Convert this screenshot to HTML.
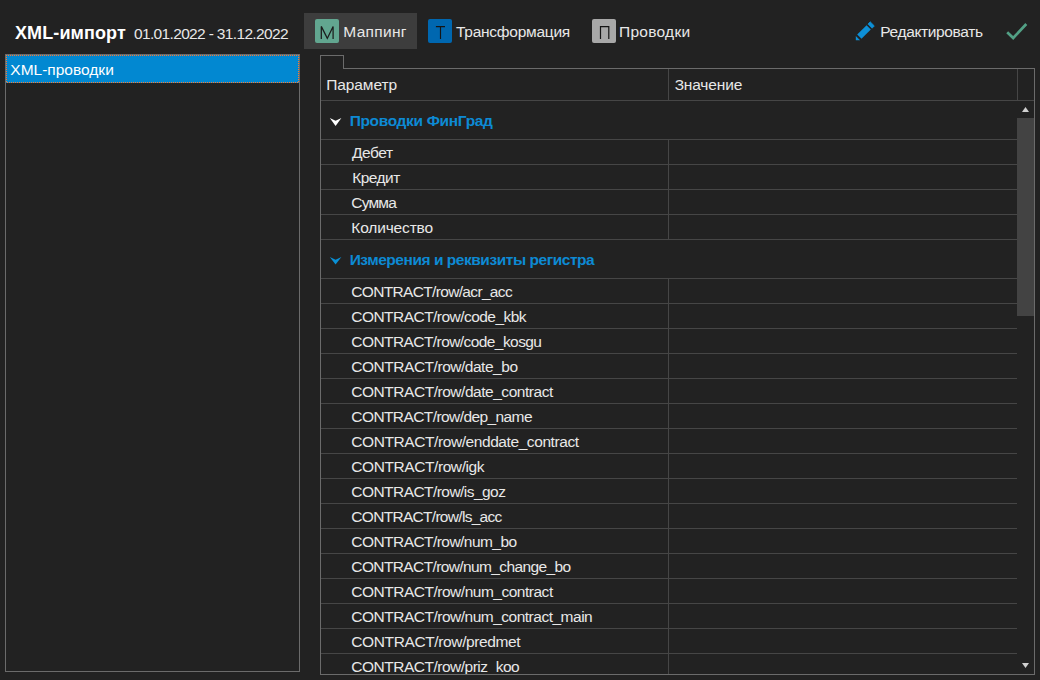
<!DOCTYPE html>
<html><head><meta charset="utf-8"><style>
html,body{margin:0;padding:0;}
body{width:1040px;height:680px;overflow:hidden;background:#222222;position:relative;font-family:"Liberation Sans",sans-serif;}
.t{position:absolute;white-space:nowrap;}
.r{position:absolute;box-sizing:content-box;}
#clip{position:absolute;left:0;top:0;width:1040px;height:674px;overflow:hidden;}
</style></head><body>
<svg class="r" style="left:0;top:0" width="1040" height="680" viewBox="0 0 1040 680" shape-rendering="crispEdges"><polyline points="320.5,674 320.5,55.5 343.5,55.5 343.5,68.5 1034.5,68.5 1034.5,674.5 320,674.5" fill="none" stroke="#6b6b6b" stroke-width="1"/><line x1="321" y1="100.5" x2="1034" y2="100.5" stroke="#464646" stroke-width="1"/><line x1="668.5" y1="69" x2="668.5" y2="100" stroke="#464646" stroke-width="1"/><line x1="1017.5" y1="69" x2="1017.5" y2="100" stroke="#464646" stroke-width="1"/><line x1="321" y1="139.5" x2="1017" y2="139.5" stroke="#464646" stroke-width="1"/><line x1="321" y1="164.5" x2="1017" y2="164.5" stroke="#464646" stroke-width="1"/><line x1="668.5" y1="140" x2="668.5" y2="164" stroke="#464646" stroke-width="1"/><line x1="321" y1="189.5" x2="1017" y2="189.5" stroke="#464646" stroke-width="1"/><line x1="668.5" y1="165" x2="668.5" y2="189" stroke="#464646" stroke-width="1"/><line x1="321" y1="214.5" x2="1017" y2="214.5" stroke="#464646" stroke-width="1"/><line x1="668.5" y1="190" x2="668.5" y2="214" stroke="#464646" stroke-width="1"/><line x1="321" y1="239.5" x2="1017" y2="239.5" stroke="#464646" stroke-width="1"/><line x1="668.5" y1="215" x2="668.5" y2="239" stroke="#464646" stroke-width="1"/><line x1="321" y1="278.5" x2="1017" y2="278.5" stroke="#464646" stroke-width="1"/><line x1="321" y1="303.5" x2="1017" y2="303.5" stroke="#464646" stroke-width="1"/><line x1="668.5" y1="279" x2="668.5" y2="303" stroke="#464646" stroke-width="1"/><line x1="321" y1="328.5" x2="1017" y2="328.5" stroke="#464646" stroke-width="1"/><line x1="668.5" y1="304" x2="668.5" y2="328" stroke="#464646" stroke-width="1"/><line x1="321" y1="353.5" x2="1017" y2="353.5" stroke="#464646" stroke-width="1"/><line x1="668.5" y1="329" x2="668.5" y2="353" stroke="#464646" stroke-width="1"/><line x1="321" y1="378.5" x2="1017" y2="378.5" stroke="#464646" stroke-width="1"/><line x1="668.5" y1="354" x2="668.5" y2="378" stroke="#464646" stroke-width="1"/><line x1="321" y1="403.5" x2="1017" y2="403.5" stroke="#464646" stroke-width="1"/><line x1="668.5" y1="379" x2="668.5" y2="403" stroke="#464646" stroke-width="1"/><line x1="321" y1="428.5" x2="1017" y2="428.5" stroke="#464646" stroke-width="1"/><line x1="668.5" y1="404" x2="668.5" y2="428" stroke="#464646" stroke-width="1"/><line x1="321" y1="453.5" x2="1017" y2="453.5" stroke="#464646" stroke-width="1"/><line x1="668.5" y1="429" x2="668.5" y2="453" stroke="#464646" stroke-width="1"/><line x1="321" y1="478.5" x2="1017" y2="478.5" stroke="#464646" stroke-width="1"/><line x1="668.5" y1="454" x2="668.5" y2="478" stroke="#464646" stroke-width="1"/><line x1="321" y1="503.5" x2="1017" y2="503.5" stroke="#464646" stroke-width="1"/><line x1="668.5" y1="479" x2="668.5" y2="503" stroke="#464646" stroke-width="1"/><line x1="321" y1="528.5" x2="1017" y2="528.5" stroke="#464646" stroke-width="1"/><line x1="668.5" y1="504" x2="668.5" y2="528" stroke="#464646" stroke-width="1"/><line x1="321" y1="553.5" x2="1017" y2="553.5" stroke="#464646" stroke-width="1"/><line x1="668.5" y1="529" x2="668.5" y2="553" stroke="#464646" stroke-width="1"/><line x1="321" y1="578.5" x2="1017" y2="578.5" stroke="#464646" stroke-width="1"/><line x1="668.5" y1="554" x2="668.5" y2="578" stroke="#464646" stroke-width="1"/><line x1="321" y1="603.5" x2="1017" y2="603.5" stroke="#464646" stroke-width="1"/><line x1="668.5" y1="579" x2="668.5" y2="603" stroke="#464646" stroke-width="1"/><line x1="321" y1="628.5" x2="1017" y2="628.5" stroke="#464646" stroke-width="1"/><line x1="668.5" y1="604" x2="668.5" y2="628" stroke="#464646" stroke-width="1"/><line x1="321" y1="653.5" x2="1017" y2="653.5" stroke="#464646" stroke-width="1"/><line x1="668.5" y1="629" x2="668.5" y2="653" stroke="#464646" stroke-width="1"/><line x1="668.5" y1="654" x2="668.5" y2="674" stroke="#464646" stroke-width="1"/><rect x="1017" y="118" width="17" height="198" fill="#434343"/></svg>
<div class="t" style="left:15.00px;top:22.51px;font-size:18px;line-height:20.682px;color:#ffffff;font-weight:700;letter-spacing:0.100px">XML-импорт</div><div class="t" style="left:134.00px;top:24.77px;font-size:15.5px;line-height:17.809px;color:#e8e8e8;font-weight:400;letter-spacing:-0.655px">01.01.2022 - 31.12.2022</div><div class="r" style="left:304px;top:13px;width:113px;height:36px;background:#3d3d3d;"></div><div class="r" style="left:315px;top:19px;width:24px;height:24px;background:#62a690;border-radius:2px"></div><div class="t" style="left:343.30px;top:23.07px;font-size:15.5px;line-height:17.809px;color:#e8e8e8;font-weight:400;letter-spacing:0.300px">Маппинг</div><div class="r" style="left:428px;top:19px;width:24px;height:24px;background:#0067b0;border-radius:2px"></div><div class="t" style="left:455.98px;top:23.07px;font-size:15.5px;line-height:17.809px;color:#e8e8e8;font-weight:400;letter-spacing:-0.255px">Трансформация</div><div class="r" style="left:592px;top:19px;width:24px;height:24px;background:#a8a8a8;border-radius:2px"></div><div class="t" style="left:619.10px;top:23.07px;font-size:15.5px;line-height:17.809px;color:#e8e8e8;font-weight:400;letter-spacing:0.257px">Проводки</div><svg class="r" style="left:0;top:0" width="1040" height="60" viewBox="0 0 1040 60">
<polygon points="870.2,21.8 874.3,25.9 872.1,28.2 868,24.1" fill="#0d8fd6" stroke="#0d8fd6" stroke-width="0.8" stroke-linejoin="round"/>
<polygon points="866.6,25.2 870.8,29.4 861.5,38.8 857.2,34.5" fill="#0d8fd6"/>
<polygon points="855.8,36 855.8,40.2 860.1,40.2" fill="#0d8fd6"/>
<polyline points="1007.2,32.2 1013.2,38 1026.3,24" fill="none" stroke="#52a085" stroke-width="2.7"/>
<path d="M321.3,39 V26.4 L327.3,38.4 L333.1,26.4 V39" fill="none" stroke="#1c1c1c" stroke-width="1.25" stroke-linejoin="miter"/>
<path d="M435.9,26.6 H445 M440.5,26.6 V39" fill="none" stroke="#151515" stroke-width="1.15"/>
<path d="M600.5,39 V26.6 H608.8 V39" fill="none" stroke="#151515" stroke-width="1.2"/>
</svg><div class="t" style="left:880.28px;top:23.07px;font-size:15.5px;line-height:17.809px;color:#e8e8e8;font-weight:400;letter-spacing:-0.360px">Редактировать</div><div class="r" style="left:5px;top:54px;width:293px;height:616px;border:1px solid #6b6b6b"></div><div class="r" style="left:6px;top:55px;width:293px;height:28px;background:#0288d1;"></div><svg class="r" style="left:0;top:0" width="300" height="90" shape-rendering="crispEdges"><line x1="6" y1="55.5" x2="299" y2="55.5" stroke="#ff7a30" stroke-dasharray="1 1"/><line x1="7" y1="82.5" x2="299" y2="82.5" stroke="#ff7a30" stroke-dasharray="1 1"/><line x1="6.5" y1="55" x2="6.5" y2="83" stroke="#ff7a30" stroke-dasharray="1 1"/><line x1="298.5" y1="55" x2="298.5" y2="83" stroke="#ff7a30" stroke-dasharray="1 1"/></svg><div class="t" style="left:10.30px;top:61.17px;font-size:15.5px;line-height:17.809px;color:#ffffff;font-weight:400;letter-spacing:0.000px">XML-проводки</div><div class="t" style="left:326.26px;top:75.97px;font-size:15.5px;line-height:17.809px;color:#e8e8e8;font-weight:400;letter-spacing:-0.103px">Параметр</div><div class="t" style="left:674.64px;top:75.97px;font-size:15.5px;line-height:17.809px;color:#e8e8e8;font-weight:400;letter-spacing:-0.154px">Значение</div>
<div id="clip"><div class="t" style="left:349.64px;top:111.97px;font-size:15.5px;line-height:17.809px;color:#0d8ad4;font-weight:700;letter-spacing:-0.336px">Проводки ФинГрад</div><div class="t" style="left:352.00px;top:143.97px;font-size:15.5px;line-height:17.809px;color:#e8e8e8;font-weight:400;letter-spacing:-0.450px">Дебет</div><div class="t" style="left:352.30px;top:168.97px;font-size:15.5px;line-height:17.809px;color:#e8e8e8;font-weight:400;letter-spacing:-0.540px">Кредит</div><div class="t" style="left:351.30px;top:193.97px;font-size:15.5px;line-height:17.809px;color:#e8e8e8;font-weight:400;letter-spacing:-0.810px">Сумма</div><div class="t" style="left:351.30px;top:218.97px;font-size:15.5px;line-height:17.809px;color:#e8e8e8;font-weight:400;letter-spacing:-0.160px">Количество</div><div class="t" style="left:349.64px;top:250.97px;font-size:15.5px;line-height:17.809px;color:#0d8ad4;font-weight:700;letter-spacing:-0.459px">Измерения и реквизиты регистра</div><div class="t" style="left:351.30px;top:282.97px;font-size:15.5px;line-height:17.809px;color:#e8e8e8;font-weight:400;letter-spacing:-0.663px">CONTRACT/row/acr_acc</div><div class="t" style="left:351.30px;top:307.97px;font-size:15.5px;line-height:17.809px;color:#e8e8e8;font-weight:400;letter-spacing:-0.540px">CONTRACT/row/code_kbk</div><div class="t" style="left:351.30px;top:332.97px;font-size:15.5px;line-height:17.809px;color:#e8e8e8;font-weight:400;letter-spacing:-0.573px">CONTRACT/row/code_kosgu</div><div class="t" style="left:351.30px;top:357.97px;font-size:15.5px;line-height:17.809px;color:#e8e8e8;font-weight:400;letter-spacing:-0.474px">CONTRACT/row/date_bo</div><div class="t" style="left:351.30px;top:382.97px;font-size:15.5px;line-height:17.809px;color:#e8e8e8;font-weight:400;letter-spacing:-0.468px">CONTRACT/row/date_contract</div><div class="t" style="left:351.30px;top:407.97px;font-size:15.5px;line-height:17.809px;color:#e8e8e8;font-weight:400;letter-spacing:-0.585px">CONTRACT/row/dep_name</div><div class="t" style="left:351.30px;top:432.97px;font-size:15.5px;line-height:17.809px;color:#e8e8e8;font-weight:400;letter-spacing:-0.418px">CONTRACT/row/enddate_contract</div><div class="t" style="left:351.30px;top:457.97px;font-size:15.5px;line-height:17.809px;color:#e8e8e8;font-weight:400;letter-spacing:-0.420px">CONTRACT/row/igk</div><div class="t" style="left:351.30px;top:482.97px;font-size:15.5px;line-height:17.809px;color:#e8e8e8;font-weight:400;letter-spacing:-0.550px">CONTRACT/row/is_goz</div><div class="t" style="left:351.30px;top:507.97px;font-size:15.5px;line-height:17.809px;color:#e8e8e8;font-weight:400;letter-spacing:-0.700px">CONTRACT/row/ls_acc</div><div class="t" style="left:351.30px;top:532.97px;font-size:15.5px;line-height:17.809px;color:#e8e8e8;font-weight:400;letter-spacing:-0.550px">CONTRACT/row/num_bo</div><div class="t" style="left:351.30px;top:557.97px;font-size:15.5px;line-height:17.809px;color:#e8e8e8;font-weight:400;letter-spacing:-0.612px">CONTRACT/row/num_change_bo</div><div class="t" style="left:351.30px;top:582.97px;font-size:15.5px;line-height:17.809px;color:#e8e8e8;font-weight:400;letter-spacing:-0.488px">CONTRACT/row/num_contract</div><div class="t" style="left:351.30px;top:607.97px;font-size:15.5px;line-height:17.809px;color:#e8e8e8;font-weight:400;letter-spacing:-0.497px">CONTRACT/row/num_contract_main</div><div class="t" style="left:351.30px;top:632.97px;font-size:15.5px;line-height:17.809px;color:#e8e8e8;font-weight:400;letter-spacing:-0.379px">CONTRACT/row/predmet</div><div class="t" style="left:351.30px;top:657.97px;font-size:15.5px;line-height:17.809px;color:#e8e8e8;font-weight:400;letter-spacing:-0.495px">CONTRACT/row/priz_koo</div></div>
<svg class="r" style="left:0;top:0" width="1040" height="680" viewBox="0 0 1040 680"><polygon points="329.8,118 335.6,120.8 341.4,118 335.6,126" fill="#ffffff"/><polygon points="329.8,257 335.6,259.8 341.4,257 335.6,264.6" fill="#0a90d5"/><polygon points="1022,112 1029,112 1025.5,107" fill="#d0d0d0"/><polygon points="1022,663 1029,663 1025.5,668" fill="#d0d0d0"/></svg>
</body></html>
